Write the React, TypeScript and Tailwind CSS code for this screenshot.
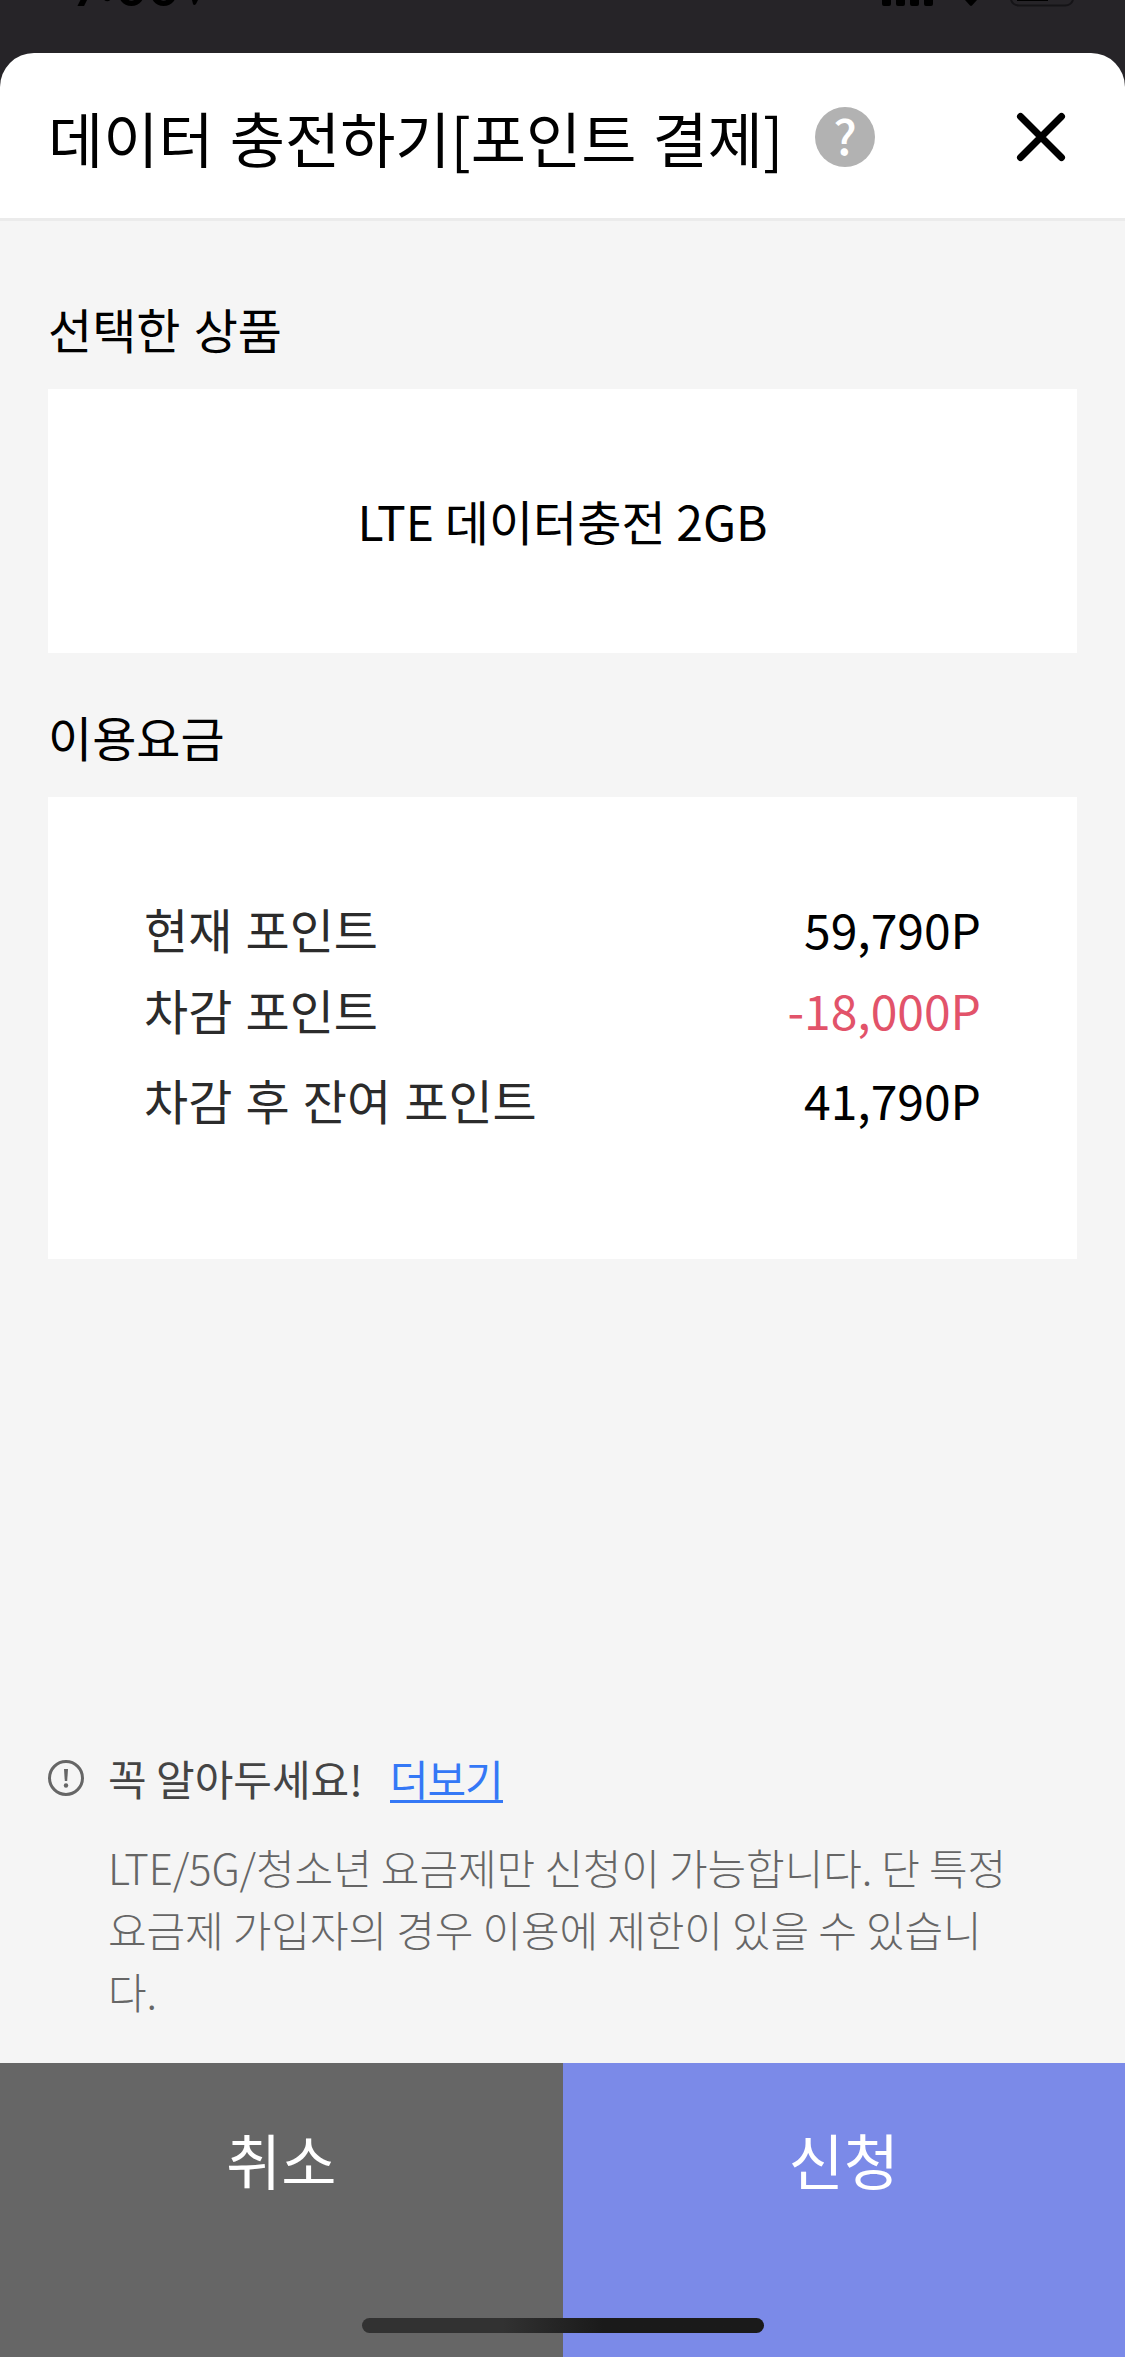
const fees = [
    { label: "현재 포인트", value: "59,790P", row: "", color: "text-black" },
    { label: "차감 포인트", value: "-18,000P", row: "mt-[9px]", color: "text-[#e2536a]" },
    { label: "차감 후 잔여 포인트", value: "41,790P", row: "mt-[18px]", color: "text-black" },
];

function StatusBar() {
    return (
        <div className="h-[53px] flex justify-between items-start overflow-hidden pl-[73px] pr-[51px]">
            <div className="flex items-start text-black">
                <span className="-mt-[40px] font-['Inter'] text-[49px] leading-[58px] font-semibold">7:00</span>
                <svg width="10" height="6" viewBox="0 0 10 6" className="ml-[10px]">
                    <path d="M2 0h6L6 4Q4 6 3 4Z" fill="#000" />
                </svg>
            </div>
            <svg width="192" height="8" viewBox="882 0 192 8">
                <path d="M882 0h9v4q0 2-2 2h-5q-2 0-2-2zM896 0h9v4q0 2-2 2h-5q-2 0-2-2zM910 0h9v4q0 2-2 2h-5q-2 0-2-2zM924 0h9v4q0 2-2 2h-5q-2 0-2-2z" fill="#000" />
                <path d="M965 0h12l-5 5.500q-1 .8-2 0z" fill="#000" />
                <path d="M1011 0q2 5.500 8 5.500h46q6 0 8-5.500" fill="none" stroke="#151417" strokeWidth="2" />
                <path d="M1017 0h31v1h-31z" fill="#000" />
            </svg>
        </div>
    );
}

function Header() {
    return (
        <header className="h-[168px] flex items-center bg-white rounded-t-[34px] border-b-[3px] border-[#ebebeb] pl-12 pr-[59px] pt-[3px]">
            <h1 className="text-[60px] leading-[90px] whitespace-nowrap [word-spacing:0.045em]">데이터 충전하기[포인트 결제]</h1>
            <button className="ml-auto mr-[141px] w-[60px] h-[60px] shrink-0 rounded-full bg-[#b2b2b2] pb-[5px] text-white text-[48px] leading-[55px] font-medium">
                ?
            </button>
            <svg width="50" height="50" viewBox="0 0 50 50" className="shrink-0">
                <path d="M4.500 4.500l41 41M45.500 4.500l-41 41" stroke="#000" strokeWidth="7" strokeLinecap="round" />
            </svg>
        </header>
    );
}

function Notice() {
    return (
        <section className="mt-auto px-12 pb-[41px]">
            <div className="flex items-center h-[62px] text-[42px] leading-[62px]">
                <svg width="36" height="36" viewBox="0 0 36 36" className="shrink-0">
                    <circle cx="18" cy="18" r="16.500" fill="none" stroke="#666" strokeWidth="3" />
                    <path d="M16 9h4l-.8 12h-2.400z" fill="#666" />
                    <circle cx="18" cy="25.500" r="2.200" fill="#666" />
                </svg>
                <span className="ml-6 text-[#444]">꼭 알아두세요!</span>
                <a className="ml-[27px] h-[50px] leading-[50px] tracking-[-1px] border-b-[3px] border-[#3478f6] text-[#3478f6]">더보기</a>
            </div>
            <p className="mt-[27px] pl-[60px] text-[42px] leading-[62px] tracking-[-0.1px] font-light whitespace-nowrap text-[#666]">
                LTE/5G/청소년 요금제만 신청이 가능합니다. 단 특정<br />
                요금제 가입자의 경우 이용에 제한이 있을 수 있습니<br />
                다.
            </p>
        </section>
    );
}

export default function App() {
    return (
        <div className="w-[1125px] h-[2357px] flex flex-col overflow-hidden bg-[#262428] text-black font-['Noto_Sans_CJK_KR',sans-serif]">
            <StatusBar />
            <Header />
            <main className="flex-1 flex flex-col bg-[#f5f5f5]">
                <section className="px-12 pt-[71px]">
                    <h2 className="text-[48px] leading-[72px] [word-spacing:0.05em]">선택한 상품</h2>
                    <div className="mt-[25px] h-[264px] flex items-center justify-center bg-white pb-[2px] text-[48px] leading-[72px]">
                        LTE 데이터충전 2GB
                    </div>
                </section>
                <section className="px-12 pt-[47px]">
                    <h2 className="text-[48px] leading-[72px]">이용요금</h2>
                    <div className="mt-[25px] h-[462px] bg-white px-24 pt-[95px]">
                        {fees.map((fee) => (
                            <div key={fee.label} className={`flex justify-between text-[48px] leading-[72px] ${fee.row}`}>
                                <span className="text-[#2b2b2b] [word-spacing:0.05em]">{fee.label}</span>
                                <span className={fee.color}>{fee.value}</span>
                            </div>
                        ))}
                    </div>
                </section>
                <Notice />
            </main>
            <footer className="relative h-[294px] grid grid-cols-2 text-white text-[60px] leading-[90px]">
                <button className="bg-[#666] pt-[51px] flex justify-center items-start">취소</button>
                <button className="bg-[#7b8ae8] pt-[51px] flex justify-center items-start">신청</button>
                {/* home indicator */}
                <div className="absolute left-[362px] top-[255px] w-[402px] h-[15px] rounded-full bg-linear-to-r from-[#323232] from-35% to-[#1a1a1a] to-60%"></div>
            </footer>
        </div>
    );
}
